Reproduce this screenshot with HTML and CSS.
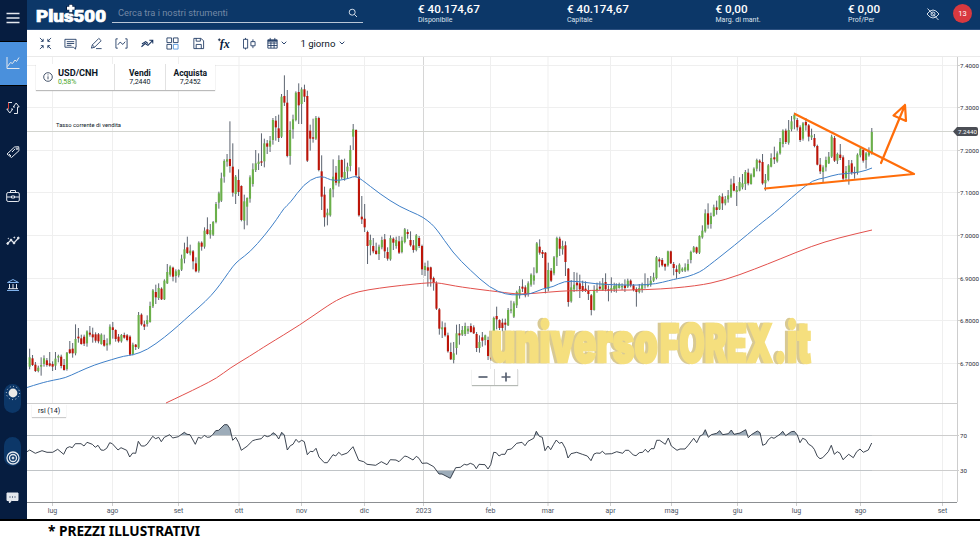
FILE: index.html
```
<!DOCTYPE html>
<html lang="it">
<head>
    <meta charset="UTF-8">
    <meta name="viewport" content="width=device-width, initial-scale=1.0">
    <title>Plus500 - USD/CNH</title>
    <link rel="stylesheet" href="styles.css">
</head>
<body>
    <div class="app">
        <nav class="sidebar">
            <a class="side-item menu"><svg width="14" height="14" viewBox="0 0 14 14"><path d="M0.500 2.500h13M0.500 7h13M0.500 11.500h13" stroke-width="1.500"/></svg></a>
            <a class="side-item active"><svg width="14" height="14" viewBox="0 0 14 14"><path d="M1 1v11.500h12.500M1.500 10.500l3-4 2 1 2.500-3.500 1.500 1.500 2.500-4"/></svg></a>
            <a class="side-item"><svg width="14" height="14" viewBox="0 0 14 14"><path d="M6 1.500H2.500v6.500H.8l3 4 3-4H5M8 12.500h3.500V6h1.700L10.200 2 7.200 6H9"/><path class="red" d="M2.500 2v6"/></svg></a>
            <a class="side-item"><svg width="14" height="14" viewBox="0 0 14 14"><path d="M1 9l7.500-7 4.200-.3.300 4L5.500 12.500zM3 9l2 2M6 7l3-3"/><circle cx="11" cy="3.700" r=".8"/></svg></a>
            <a class="side-item"><svg width="14" height="14" viewBox="0 0 14 14"><rect x=".7" y="3.500" width="12.600" height="9" rx="1.500"/><path d="M4.500 3.500V1.500h5v2M1 8h4.500M8.500 8H13M5.500 7h3v2h-3z"/></svg></a>
            <a class="side-item"><svg width="14" height="14" viewBox="0 0 14 14"><path d="M1.500 9.500L5 6l3 3 4.500-5" stroke-width="1.200"/><g class="dots"><circle cx="1.700" cy="9.500" r=".9"/><circle cx="5" cy="6" r=".9"/><circle cx="8" cy="9" r=".9"/><circle cx="12.300" cy="4" r=".9"/><circle cx="2.300" cy="4.500" r=".3"/><circle cx="8.300" cy="3.500" r=".5"/></g></svg></a>
            <a class="side-item"><svg width="14" height="14" viewBox="0 0 14 14"><path class="blue" d="M1.500 4.500L7 1.500l5.500 3zM1 12.500h12"/><path d="M3.500 6v5M7 6v5M10.500 6v5M2 10.700h10"/></svg></a>
            <div class="side-bottom">
                <a class="pill top"><svg width="16" height="16" viewBox="0 0 16 16"><circle class="sun" cx="8" cy="8" r="4.400"/><circle cx="8" cy="8" r="6.600" stroke-dasharray=".9 2.550"/></svg></a>
                <a class="pill bottom"><svg width="14" height="14" viewBox="0 0 14 14"><circle cx="7" cy="7" r="6" stroke-width="1.300"/><circle cx="7" cy="7" r="3.500" stroke-width="1.300"/><circle class="white" cx="7" cy="7" r="1"/></svg></a>
                <a class="chat"><svg width="13" height="12" viewBox="0 0 13 12"><path class="white" d="M1 1h11v7.500H5.500L3.500 11l-.5-2.500H1z"/><path class="chat-dots" d="M3.500 5h6"/></svg></a>
            </div>
        </nav>

        <div class="main">
            <header class="topbar">
                <svg class="logo" width="74" height="24" viewBox="0 0 74 24">
                    <text x="2" y="19.700" textLength="70" lengthAdjust="spacingAndGlyphs">Plus500</text>
                    <path class="logo-edge" d="M36.800 2v9.500M32 6h9.500"/>
                    <path d="M36.800 2.800v7.500M33 6.200h7.600"/>
                </svg>
                <div class="search">
                    <span>Cerca tra i nostri strumenti</span>
                    <svg width="10" height="10" viewBox="0 0 10 10"><circle cx="4.200" cy="4.200" r="3"/><path d="M6.400 6.400L9 9"/></svg>
                </div>
                <div class="balances">
                    <div class="balance"><b>€ 40.174,67</b><span>Disponibile</span></div>
                    <div class="balance"><b>€ 40.174,67</b><span>Capitale</span></div>
                    <div class="balance"><b>€ 0,00</b><span>Marg. di mant.</span></div>
                    <div class="balance"><b>€ 0,00</b><span>Prof/Per</span></div>
                </div>
                <svg class="eye" width="14" height="14" viewBox="0 0 14 14"><path d="M1 7q6-8 12 0-6 8-12 0zM1.500 1.500l11 11.500"/><circle cx="7" cy="7" r="2"/></svg>
                <span class="notify">13</span>
            </header>

            <div class="toolbar">
                <svg viewBox="0 0 14 14"><path d="M1 1l3.500 3.500M4.500 2v2.700H2M13 1L9.500 4.500M9.500 2v2.700H12M1 13l3.500-3.500M4.500 12V9.300H2M13 13L9.500 9.500M9.500 12V9.300H12"/></svg>
                <svg viewBox="0 0 14 14"><path d="M1 2.500h12v8.500h-.500v2L10 11H1zM3 5h8M3 7h8M3 9h5"/></svg>
                <svg viewBox="0 0 14 14"><path d="M1.500 12l1-3.500L9.500 1.500 12 4 5 11zM2.500 8.500L5 11M6.500 12.500h6"/></svg>
                <svg viewBox="0 0 14 14"><path d="M3 2H1v10h2M11 2h2v10h-2M3 8.500l2.500-3 3 2.500L11 5"/></svg>
                <svg viewBox="0 0 14 14"><path d="M.5 10.500l4-3.500 3 2L12.500 4M9 3.500h3.700V7M1 7.500L5 5l2.500 2" stroke-width="1.100"/></svg>
                <svg viewBox="0 0 14 14"><path d="M1 1h5v5H1zM8 1h5v5H8zM1 8h5v5H1z"/><path class="accent" d="M8 8h5v5H8z"/></svg>
                <svg viewBox="0 0 14 14"><path d="M2 1.500h7.500L12.500 4v8.500H2zM4.500 1.500v3H9v-3M4.500 12.500V8H10v4.500"/></svg>
                <svg viewBox="0 0 14 14"><text class="fx" x="3" y="11.500">fx</text><path class="fx-plus" d="M1 3h3M2.500 1.500v3"/></svg>
                <svg viewBox="0 0 14 14"><path d="M.5 2.500h4.500v9.500H.5zM2.700 1v1.500M2.700 12v1.500M8.500 5H13v4.500H8.500zM10.700 2.500V5M10.700 9.500V12"/></svg>
                <div class="dropdown date">
                    <svg viewBox="0 0 14 14"><path d="M2 3h10v9H2zM2 6.500h10M2 9.200h10M5.300 5.500V12M8.700 5.500V12M4.500 1v3M9.500 1v3"/><path d="M2 4.200h10" stroke-width="1.600"/></svg>
                    <svg class="caret" viewBox="0 0 6 4"><path d="M.7.700L3 3 5.300.700"/></svg>
                </div>
                <div class="dropdown period">
                    <span>1 giorno</span>
                    <svg class="caret" viewBox="0 0 6 4"><path d="M.7.700L3 3 5.300.700"/></svg>
                </div>
            </div>

            <div class="chart-area">
                <!-- viewBox starts at the page position of the chart -->
                <svg id="chart" width="953" height="463" viewBox="27 57 953 463"></svg>

                <div class="quote">
                    <div class="instrument">
                        <svg width="10" height="10" viewBox="0 0 10 10"><circle cx="5" cy="5" r="4.300"/><path d="M5 4.300v3M5 2.400v1"/></svg>
                        <div><b>USD/CNH</b><span class="change">0,58%</span></div>
                    </div>
                    <div class="side"><b>Vendi</b><span>7,2440</span></div>
                    <div class="side"><b>Acquista</b><span>7,2452</span></div>
                </div>
                <div class="rsi-label">rsi (14)</div>
                <div class="zoom">
                    <button><svg width="10" height="10" viewBox="0 0 10 10"><path d="M.5 5h9"/></svg></button>
                    <button><svg width="10" height="10" viewBox="0 0 10 10"><path d="M.5 5h9M5 .5v9"/></svg></button>
                </div>
            </div>
        </div>
    </div>
    <footer class="note">* PREZZI ILLUSTRATIVI</footer>
    <script src="chart.js"></script>
</body>
</html>
```
FILE: styles.css
```
:root {
    --navy: #061d40;
    --blue: #0c3768;
    --active: #4a90dc;
    --ink: #14305c;
    --up: #6bb04a;
    --down: #bd1408;
    --orange: #ff6d0a;
}

* {
    box-sizing: border-box;
}

body {
    margin: 0;
    background: #fff;
    font-family: Roboto, "Liberation Sans", sans-serif;
    color: #0b1626;
    overflow: hidden;
}

svg {
    display: block;
    fill: none;
    flex-shrink: 0;
}

.app {
    display: flex;
    height: 521px;
    border-bottom: 2px solid #000;
}

/* sidebar */
.sidebar {
    display: flex;
    flex-direction: column;
    width: 27px;
    background: var(--navy);
}

.sidebar svg {
    stroke: #e4e8ee;
}

.side-item {
    display: flex;
    align-items: center;
    justify-content: center;
    height: 44.300px;
    padding-right: 2px;
    padding-bottom: 1px;
}

.menu {
    height: 41px;
    padding-bottom: 5px;
}

.active {
    height: 45px;
    background: var(--active);
    border-top: 1px solid #000;
    border-bottom: 1px solid #000;
}

.sidebar .red {
    stroke: #d8403a;
}

.sidebar .blue {
    stroke: #7fb2ec;
}

.sidebar .dots,
.sidebar .white {
    fill: #e4e8ee;
}

.sidebar .sun {
    fill: #eceae6;
    stroke: none;
}

.side-bottom {
    display: flex;
    flex-direction: column;
    align-items: center;
    margin-top: 77px;
    padding-right: 2px;
}

.pill {
    display: flex;
    justify-content: center;
    width: 17px;
    height: 29px;
    border-radius: 9px;
    background: var(--blue);
}

.pill.top {
    padding-top: 1px;
}

.pill.bottom {
    align-items: flex-end;
    margin-top: 24px;
    padding-bottom: 1px;
}

.chat {
    margin-top: 26px;
}

.sidebar .chat-dots {
    stroke: var(--navy);
    stroke-dasharray: 1 1.500;
}

/* top bar */
.main {
    flex: 1;
    min-width: 0;
}

.topbar {
    display: flex;
    height: 30px;
    background: var(--blue);
    border-bottom: 1px solid #2c5080;
    color: #fff;
}

.logo {
    margin: 2px 0 0 7px;
}

.logo text {
    font-size: 16px;
    font-weight: 900;
    fill: #fff;
    stroke: #fff;
    stroke-width: .7;
}

.logo path {
    stroke: #fff;
    stroke-width: 3;
}

.logo .logo-edge {
    stroke: var(--navy);
    stroke-width: 4.200;
}

.search {
    display: flex;
    justify-content: space-between;
    align-items: center;
    width: 251px;
    height: 23px;
    margin-left: 4px;
    padding: 3px 5px 0 6px;
    border-bottom: 1px solid #b9c6d6;
    font-size: 9.300px;
    color: #7388a5;
}

.search svg,
.eye {
    stroke: #d3dce8;
}

.balances {
    display: grid;
    grid-template-columns: 149px 148.500px 132.500px 77px;
    margin-left: 55px;
}

.balance b {
    display: block;
    margin-top: 2px;
    font-size: 11.700px;
    font-weight: 500;
    line-height: 14px;
}

.balance span {
    display: block;
    font-size: 7px;
    line-height: 9px;
    color: #dbe3ee;
}

.eye {
    margin: 7px 0 0 1px;
}

.notify {
    width: 19px;
    height: 19px;
    margin: 4px 0 0 13px;
    border-radius: 50%;
    background: #d8393f;
    font-size: 7.500px;
    line-height: 19px;
    text-align: center;
}

/* toolbar */
.toolbar {
    display: flex;
    align-items: center;
    gap: 12.450px;
    height: 27px;
    padding-left: 12px;
    border-bottom: 1px solid #eaeaea;
}

.toolbar svg {
    width: 13px;
    height: 13px;
    stroke: var(--ink);
    stroke-width: .9;
}

.toolbar .accent {
    stroke: #4a90dc;
}

.toolbar .fx {
    font: italic bold 13px "Liberation Serif", serif;
    fill: #061d40;
    stroke: none;
}

.toolbar .fx-plus {
    stroke: #061d40;
}

.dropdown {
    display: flex;
    align-items: center;
    gap: 4px;
    font-size: 9.600px;
}

.date {
    gap: 2px;
    margin-left: -2px;
}

.period {
    margin-left: 1px;
}

.toolbar .caret {
    width: 6px;
    height: 4px;
}

/* chart */
.chart-area {
    position: relative;
    height: 462px;
    overflow: hidden;
}

.grid {
    stroke: #efefef;
}

.year {
    stroke: #d6d6d6;
}

.level {
    stroke: #cdcdcd;
}

.axis {
    stroke: #8c8f92;
}

.axis-text {
    font-size: 7px;
    fill: #4a5463;
}

.price-text {
    font-size: 6.200px;
    fill: #1f2a38;
}

.rate-line {
    stroke: #d3d5d0;
}

.rate-text {
    font-size: 5.800px;
    fill: #0b1626;
}

.rate-tag {
    fill: #4b4e55;
}

.rate-tag-text {
    font-size: 6.200px;
    fill: #fff;
}

.wick {
    stroke: #4a5260;
    stroke-width: .9;
}

.up {
    fill: var(--up);
}

.down {
    fill: var(--down);
}

.ma-fast {
    stroke: #3f80c8;
}

.ma-slow {
    stroke: #e2504c;
}

.rsi {
    stroke: #27303d;
    stroke-width: .9;
}

.rsi-fill {
    fill: #9dacb9;
}

.drawing {
    stroke: var(--orange);
    stroke-width: 2.200;
    stroke-linecap: round;
    stroke-linejoin: round;
}

.watermark {
    font-family: Inter, Roboto, sans-serif;
    font-size: 52px;
    font-weight: 900;
    fill: #f5df7e;
    stroke: #f5df7e;
    stroke-width: 2.500;
    filter: drop-shadow(-2.500px .5px 0 #d8c993);
}

.watermark .lower {
    font-size: 55px;
}

.quote {
    position: absolute;
    top: 7px;
    left: 9px;
    display: flex;
    width: 179px;
    height: 26px;
    background: #fff;
    box-shadow: 0 1px 1px #bbb;
    font-size: 7px;
    line-height: 9px;
}

.quote b {
    display: block;
    font-size: 8.500px;
    line-height: 10px;
}

.quote span {
    display: block;
}

.instrument {
    display: flex;
    align-items: center;
    gap: 5px;
    width: 79px;
    padding-left: 7px;
}

.instrument svg {
    stroke: #33435c;
    stroke-width: .9;
}

.quote .instrument b {
    font-size: 9.200px;
}

.quote .change {
    color: #4aa629;
}

.side {
    width: 51px;
    padding-top: 4px;
    border-left: 1px solid #e2e2e2;
    text-align: center;
}

.rsi-label {
    position: absolute;
    top: 347px;
    left: 5px;
    width: 34px;
    height: 13px;
    background: #fff;
    box-shadow: 0 1px 1px #ccc;
    font-size: 7px;
    line-height: 14px;
    text-align: center;
}

.zoom {
    position: absolute;
    top: 312px;
    left: 445px;
    display: flex;
    box-shadow: 0 1px 1px #b4b9b4;
}

.zoom button {
    display: flex;
    align-items: center;
    justify-content: center;
    width: 23px;
    height: 16px;
    padding: 0;
    border: 0;
    border-right: 1px solid #ddd;
    background: #fff;
}

.zoom svg {
    stroke: #596272;
    stroke-width: 1.700;
}

.note {
    padding-left: 48px;
    font: bold 13.700px/20px "Noto Sans", sans-serif;
    color: #000;
}
```
FILE: chart.js
```
const NS = 'http://www.w3.org/2000/svg';
const chart = document.getElementById('chart');

// values inside a block are thirds of a pixel, counted from x / y
// one candle: direction, high, body top, body bottom, low
const STEP = 8.6;
const blocks = [
    { x: 27, y: 200, start: 8, candles: `
        g 446 472 500 508,r 465 475 495 498,r 486 494 513 516,g 497 503 513 517,g 472 495 500 527,g 466 475 492 500,
        r 474 481 495 500,r 456 490 497 500,r 484 492 500 513,g 456 476 497 510,g 464 468 473 487,r 464 470 498 505,
        r 477 495 510 512,g 456 458 507 512,r 423 448 459 462,r 429 446 460 473,g 373 417 460 466,r 384 410 415 428,
        r 404 415 432 434,r 404 410 431 438,g 391 394 430 440,r 378 398 404 410,r 383 403 412 428,r 397 403 422 428,
        r 399 403 424 430,g 400 404 432 434,r 404 420 437 440,g 415 430 436 452,g 373 380 432 436,r 366 382 390 416,
        r 388 390 417 425,r 402 410 424 428,g 402 405 424 428,r 398 405 413 416,r 402 406 420 424,r 406 410 464 467,
        g 428 434 462 466,r 432 434 441 450,g 336 345 443 447,r 340 344 373 377,r 362 373 380 390,g 346 360 372 380,
        g 305 318 366 368,g 267 271 319 324,r 254 276 292 312,g 250 264 294 300,r 262 266 298 300,g 238 242 298 300,
        g 192 216 250 252,g 196 200 224 230,r 200 203 230 244,g 208 214 228 248,g 208 210 226 232,g 164 176 209 213,
        g 128 148 176 190,r 110 142 159 162,g 134 152 160 166,r 150 154 184 208,r 172 190 214 217,g 124 128 212 218,
        r 124 128 140 152,g 82 92 140 146,r 52 88 102 104,g 72 90 104 116,g 63 66 104 108,g 6 12 66 70,g -25 -20 8 26` },
    { x: 220, y: 60, start: 4, candles: `
        g 338 355 422 426,g 298 303 350 368,g 282 298 305 320,r 184 297 318 338,r 250 320 398 410,g 345 350 402 432,
        r 328 360 396 408,r 376 378 480 484,g 404 424 482 508,g 412 414 440 496,g 346 352 416 428,g 310 328 372 380,
        g 270 310 330 336,g 280 305 312 330,r 220 304 308 318,g 236 250 304 322,r 240 250 260 282,g 228 242 260 276,
        g 174 180 240 254,r 168 182 202 242,r 164 205 234 246,g 102 110 230 234,r 46 108 128 138,r 90 128 288 292,
        g 184 210 288 314,g 164 178 208 236,g 94 98 180 184,r 70 96 136 192,g 82 88 132 192,r 74 88 110 126,
        r 92 108 302 306,r 194 212 236 272,r 176 232 236 248,g 168 174 236 240,r 170 174 330 334,r 286 334 410 450,
        r 380 404 472 500,g 446 458 466 496,g 384 388 466 470,g 298 350 388 412,r 318 338 368 376,g 286 300 370 380,
        r 298 300 352 358,g 296 336 356 362,g 308 320 334 356,g 256 270 318 334,g 192 208 230 270,r 208 210 346 352,
        r 322 350 466 470,r 408 470 478 492,r 432 476 502 516,r 512 516 558 612,g 524 540 556 586,r 534 558 574 580,
        r 548 572 582 584,g 554 560 582 600,g 530 540 562 568,r 522 538 574 594,r 562 576 596 602,g 526 534 598 602,
        r 532 536 548 570,g 530 540 558 566,r 528 544 578 582,g 530 542 576 580,g 504 508 546 550,r 508 516 522 536,
        r 514 540 556 560,r 540 556 570 578,g 522 526 570 574,r 528 534 558 564,r 554 558 628 645` },
    { x: 400, y: 220, start: 75, candles: `
        g 128 138 150 168,r 122 142 152 200,r 140 142 178 200,r 170 174 188 212,r 184 190 266 270,r 264 268 326 344,
        g 304 322 328 354,r 308 322 346 350,r 338 346 394 398,r 368 396 418 420,g 366 400 420 430,g 314 340 384 404,
        r 312 340 346 374,g 318 330 344 348,g 308 318 342 348,g 318 326 334 342,r 310 318 336 338,r 316 322 340 342,
        r 336 342 384 396,g 346 366 384 398,r 336 352 362 380,g 344 346 360 376,r 350 360 408 420,r 380 386 416 422,
        g 290 294 388 392,r 260 288 298 328,r 298 300 324 330,r 296 308 324 334,r 296 308 314 332,g 264 270 316 318,
        g 242 268 272 280,g 244 250 290 294,g 212 216 256 264,g 198 208 226 236,r 178 200 206 216,r 196 202 226 232,
        g 184 190 222 230,g 160 164 194 200,g 142 166 182 194,g 66 70 158 160,r 58 80 98 104,r 90 96 102 114,
        r 96 98 204 220,g 128 150 206 214,r 144 152 182 186,g 108 112 160 166,g 50 54 112 138,r 50 56 86 108,
        g 62 78 88 104,r 64 76 126 168,r 144 146 246 260,g 180 202 244 248,g 156 194 208 216,r 158 188 196 214,
        r 164 190 208 234,r 182 198 212 216,r 184 206 212 216,r 196 210 222 240,r 222 226 270 286,g 196 210 270 272,
        g 188 206 210 218,r 184 200 206 210,g 174 190 210 212,r 160 186 208 214,r 196 208 212 244,g 172 204 210 218,
        g 188 198 208 216` },
    { x: 600, y: 150, start: 49, candles: `
        g 400 406 416 428,g 398 402 414 416,g 400 408 412 420,r 388 406 414 426,g 386 392 410 414,r 388 392 406 412,
        r 402 406 420 424,r 412 418 426 470,g 402 414 426 430,g 398 404 418 428,g 370 402 406 416,g 384 404 408 412,
        g 378 392 404 410,g 368 382 392 396,g 318 322 384 388,r 322 328 334 352,r 324 330 346 350,r 340 342 350 362,
        g 302 304 346 350,r 302 304 340 342,r 336 342 354 376,r 346 358 366 386,g 340 344 368 372,g 352 356 362 366,
        g 340 352 362 366,g 328 342 360 364,g 302 306 330 340,g 288 292 306 308,r 290 292 308 312,g 256 258 308 312,
        g 226 242 262 266,g 178 190 244 248,r 160 190 224 236,g 188 198 222 236,g 164 172 198 200,r 152 172 180 194,
        g 136 138 178 180,r 130 140 160 180,g 138 148 160 166,g 120 136 148 158,g 86 104 140 144,r 78 100 122 124,
        g 108 120 126 168,g 82 96 122 124,g 72 100 112 118,g 60 66 102 120,r 56 68 100 106,g 70 74 102 104,
        g 52 56 80 82,g 26 30 56 64,r 28 32 38 64,r 12 36 100 104,g 72 90 100 122,g 42 46 90 94,g 10 24 50 52` },
    { x: 740, y: 60, start: 103, candles: `
        r 260 292 298 312,g 274 280 304 308,g 234 246 280 284,g 208 212 252 262,r 206 212 246 252,g 180 210 248 254,
        g 168 184 208 214,g 158 164 178 208,r 174 180 202 212,r 196 202 240 246,g 186 190 236 242,r 174 186 196 212,
        r 192 196 230 244,g 206 226 232 240,r 222 234 258 262,r 254 258 314 316,r 294 314 334 342,g 316 322 336 366,
        g 290 300 322 334,g 276 290 310 312,g 224 230 290 294,r 228 234 302 306,g 278 282 302 312,r 252 284 294 300,
        r 286 292 356 360,g 318 334 354 362,g 300 316 336 374,r 300 310 338 344,r 320 336 340 356,g 280 284 338 344,
        g 262 266 286 292,r 264 270 302 308,g 276 280 300 326,g 262 276 286 290,g 204 216 278 284` }
];

const maFast = '27,387.5 41,383 54,380 65,378 78,372 94,365 112,359.5 124,356 133,355 147,350 165,337 179,325 190,315 206,301 216,290 224,279 233,266 239,260 250,252 265,235 277,219 284,208 290,203 304,184 317,176.5 325,177 330,180 340,180.5 350,178 355,176 361,179 380,194 400,207 419,215 427,220 436,228 453,253 470,270 490,288 506,294.5 518,295 531,294 543,288.5 553,287 564,281 580,281.5 600,284.5 650,285.5 675,279 687,277 700,272 707,267 735,245 760,224 773,214 798,192 813,180 825,178 837,174 860,172.5 872,168';
const maSlow = '166,403 185,394 200,386.7 217,378 230,368 250,356 267,345 300,325 330,304 343,297 358,291.5 380,288 400,285.5 430,282.5 440,283 460,287 500,292 520,294.5 550,292 570,290.5 650,290 697,286 725,280 755,269 780,259 812,246 838,238 872,230';

const rsiLeft = '0,155 8,150 25,160 45,152 60,157 77,157 92,148 110,163 119,144 128,140 136,143 145,131 162,131 171,138 180,127 196,133 205,142 213,136 222,150 230,151 239,145 248,128 256,131 273,150 282,143 299,151 308,171 317,159 326,160 334,124 343,138 352,138 360,133 377,109 386,116 395,112 403,125 412,112 428,104 437,114 454,110 472,97 480,103 489,104 505,133 514,112 523,115 532,106 541,112 549,111 557,104 566,92 575,91 592,74 601,74 609,86 617,121 626,112 635,128 643,151 660,139 677,122 686,119 703,116 712,106 721,110 730,107 738,98 747,104 755,117 764,97 772,105 781,150 790,137 798,133 807,118 815,127 824,121 832,125 841,164 850,154 858,155 867,145 876,171 892,188 901,188 918,164 926,168 935,157 944,165 961,159 978,140 995,181 1010,185 1020,193 1046,196 1063,185 1080,194 1090,179 1107,180 1116,185 1133,168 1141,170 1158,180 1168,169 1176,175 1185,190 1200,189 1220,200 1236,222 1245,222 1270,235 1286,203 1300,202 1312,193 1320,195 1330,190 1340,194 1348,206 1356,193 1374,194 1383,207 1391,194 1400,157 1408,158 1416,168';
const rsiRight = '5,163 15,163 22,149 34,147 50,130 66,127 75,137 84,124 101,115 109,94 118,109 127,112 135,152 144,138 152,149 161,133 169,120 178,130 186,127 196,145 204,174 213,161 230,157 247,163 262,168 273,182 282,162 290,159 300,160 307,154 316,162 335,161 350,155 368,160 376,151 386,151 400,165 408,167 418,158 428,157 436,148 444,157 453,146 462,146 470,121 479,121 496,133 505,114 514,138 531,151 540,147 555,147 565,136 581,115 590,128 600,108 608,104 616,89 625,112 634,104 650,100 659,92 668,104 685,101 694,90 702,103 720,99 737,89 745,113 754,104 772,93 780,98 788,136 797,132 805,119 814,112 822,115 840,103 848,94 857,107 874,95 883,94 892,105 900,128 908,115 917,119 926,133 935,138 943,148 952,169 960,176 968,173 985,155 994,136 1003,163 1012,155 1020,160 1029,179 1046,163 1060,173 1070,155 1080,147 1090,157 1105,150 1115,129';

const months = [
    ['lug', 52.5], ['ago', 112.5], ['set', 178.5], ['ott', 239], ['nov', 301.5], ['dic', 364.5], ['2023', 423.5],
    ['feb', 490.5], ['mar', 548], ['apr', 610.5], ['mag', 671.5], ['giu', 737.5], ['lug', 796.5], ['ago', 860.5], ['set', 942.5]
];
const prices = [
    ['7.4000', 65.5], ['7.3000', 107.5], ['7.2000', 150.5], ['7.1000', 192.5],
    ['7.0000', 235.5], ['6.9000', 278.5], ['6.8000', 320.5], ['6.7000', 363.5]
];

function add(tag, attrs, text) {
    const el = document.createElementNS(NS, tag);
    for (const key in attrs) {
        el.setAttribute(key, attrs[key]);
    }
    if (text) {
        el.textContent = text;
    }
    chart.appendChild(el);
    return el;
}

function line(x1, y1, x2, y2, cls) {
    add('line', { x1, y1, x2, y2, class: cls });
}

function toPage(points, x, y) {
    return points.split(' ').map(p => {
        const [px, py] = p.split(',');
        return (x + px / 3).toFixed(1) + ',' + (y + py / 3).toFixed(1);
    }).join(' ');
}

// round the corners by running curves between the midpoints
function smooth(points) {
    const list = points.split(' ').map(p => p.split(',').map(Number));
    let d = 'M' + list[0];
    for (let i = 1; i < list.length - 1; i++) {
        const [x, y] = list[i];
        const [nx, ny] = list[i + 1];
        d += `Q${x} ${y} ${(x + nx) / 2} ${(y + ny) / 2}`;
    }
    return d + 'L' + list[list.length - 1];
}

function drawGrid() {
    months.forEach(([name, x]) => {
        line(x, 57, x, 502, name === '2023' ? 'year' : 'grid');
        line(x, 502, x, 506, 'level');
        add('text', { x, y: 513, 'text-anchor': 'middle', class: 'axis-text' }, name);
    });
    prices.forEach(([label, y]) => {
        line(27, y, 957, y, 'grid');
        line(957, y, 960, y, 'level');
        add('text', { x: 960, y: y + 2, class: 'price-text' }, label);
    });
    line(27, 403.5, 957, 403.5, 'level');
    line(27, 435.5, 959, 435.5, 'level');
    line(27, 470.5, 959, 470.5, 'level');
    line(957.5, 57, 957.5, 502, 'level');
    line(27, 502.5, 957, 502.5, 'axis');
    add('text', { x: 960, y: 437.5, class: 'price-text' }, '70');
    add('text', { x: 960, y: 472.5, class: 'price-text' }, '30');
}

function drawRate() {
    line(27, 131.5, 957, 131.5, 'rate-line');
    add('text', { x: 56, y: 127, textLength: 65, class: 'rate-text' }, 'Tasso corrente di vendita');
    add('path', { d: 'M953 131.500l4-4.500h19q2 0 2 2v5q0 2-2 2h-19z', class: 'rate-tag' });
    add('text', { x: 958, y: 133.8, class: 'rate-tag-text' }, '7.2440');
}

function drawCandles() {
    blocks.forEach(block => {
        block.candles.trim().split(',').forEach((row, i) => {
            const [dir, high, top, bottom, low] = row.trim().split(' ');
            const x = block.x + (block.start + i * STEP) / 3;
            line(x, block.y + high / 3, x, block.y + low / 3, 'wick');
            add('rect', {
                x: x - 1.05,
                y: block.y + top / 3,
                width: 2.1,
                height: Math.max(1, (bottom - top) / 3),
                class: dir === 'g' ? 'up' : 'down'
            });
        });
    });
}

function drawRsi() {
    const points = toPage(rsiLeft, 27, 400) + ' ' + toPage(rsiRight, 500, 400);
    const zones = [['over', 404, 31.5, 435.5], ['under', 470.5, 31, 470.5]];
    zones.forEach(([id, y, height, level]) => {
        const clip = add('clipPath', { id });
        clip.appendChild(add('rect', { x: 27, y, width: 930, height }));
        add('polygon', { points: `27,${level} ${points} 872,${level}`, class: 'rsi-fill', 'clip-path': `url(#${id})` });
    });
    add('polyline', { points, class: 'rsi' });
}

function drawWatermark() {
    const mark = add('text', { y: 361.5, class: 'watermark' });
    const parts = [['universo', 491, 167, 'lower'], ['FOREX', 660, 113, 'upper'], ['.it', 774, 37, 'lower']];
    parts.forEach(([text, x, textLength, cls]) => {
        mark.appendChild(add('tspan', { x, textLength, lengthAdjust: 'spacingAndGlyphs', class: cls }, text));
    });
}

drawGrid();
drawRate();
drawCandles();
add('path', { d: smooth(maSlow), class: 'ma-slow' });
add('path', { d: smooth(maFast), class: 'ma-fast' });
drawRsi();
drawWatermark();

// trend lines and breakout arrow
add('path', { d: 'M795 114L914 174L765 188.500', class: 'drawing' });
add('path', { d: 'M881 163L905 105M893.500 115.500L905 105L906 121Z', class: 'drawing' });
```
